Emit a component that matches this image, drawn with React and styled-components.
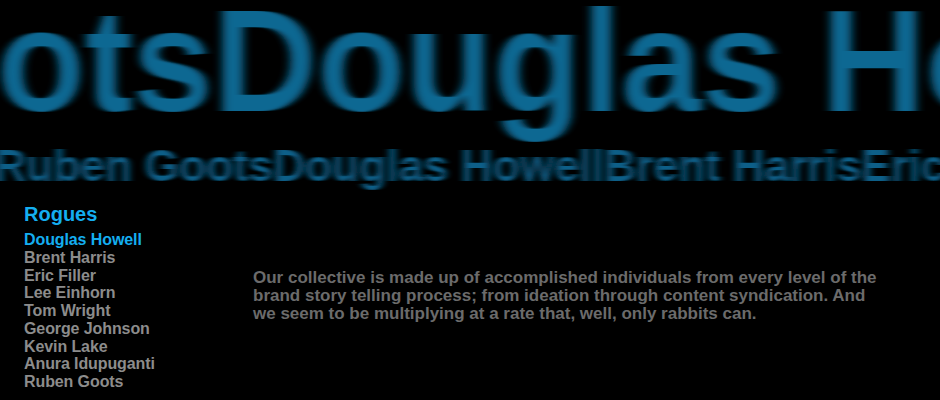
import React from 'react';
import styled, { createGlobalStyle } from 'styled-components';

const GlobalStyle = createGlobalStyle`
  * {
    margin: 0;
    padding: 0;
    box-sizing: border-box;
  }

  html, body {
    background: #000;
    width: 940px;
    height: 400px;
    overflow: hidden;
  }

  body {
    font-family: 'Liberation Sans', Arial, Helvetica, sans-serif;
    -webkit-font-smoothing: antialiased;
  }
`;

const rogues = [
  'Douglas Howell',
  'Brent Harris',
  'Eric Filler',
  'Lee Einhorn',
  'Tom Wright',
  'George Johnson',
  'Kevin Lake',
  'Anura Idupuganti',
  'Ruben Goots',
];

const Page = styled.div`
  width: 940px;
  height: 400px;
  background: #000;
  overflow: hidden;
  display: flex;
  flex-direction: column;
`;

const Banner = styled.div`
  height: 196px;
  overflow: hidden;
  display: flex;
  flex-direction: column;
`;

const Marquee = styled.div`
  white-space: nowrap;
  color: ${p => p.$color};
  font-size: ${p => p.$size}px;
  line-height: ${p => p.$lineHeight}px;
  letter-spacing: ${p => p.$spacing}px;
  font-weight: 700;
  margin-left: ${p => p.$shift}px;
  margin-top: ${p => p.$top}px;
  filter: url(#${p => p.$blur});
`;

const Body = styled.div`
  display: flex;
  padding: 6px 0 0 24px;
`;

const Sidebar = styled.nav`
  width: 229px;
  display: flex;
  flex-direction: column;
`;

const Heading = styled.h2`
  color: #14aef0;
  font-size: 20px;
  font-weight: 700;
  line-height: 24px;
  margin-bottom: 5px;
`;

const NameList = styled.ul`
  list-style: none;
`;

const Name = styled.li`
  color: ${p => (p.$active ? '#14aef0' : '#8c8c8c')};
  font-size: 16px;
  font-weight: 700;
  line-height: 17.75px;
  letter-spacing: -0.1px;
`;

const Blurb = styled.p`
  width: 630px;
  margin-top: 67px;
  color: #6b6b6b;
  font-size: 17px;
  font-weight: 700;
  line-height: 18px;
`;

const Filters = () => (
  <svg width="0" height="0" style={{ position: 'absolute' }} aria-hidden="true">
    <filter id="blurBig" x="-10%" y="-10%" width="120%" height="120%">
      <feGaussianBlur stdDeviation="5 0.6" />
    </filter>
    <filter id="blurSmall" x="-10%" y="-10%" width="120%" height="120%">
      <feGaussianBlur stdDeviation="3.5 0.4" />
    </filter>
  </svg>
);

export default function App() {
  return (
    <>
      <GlobalStyle />
      <Filters />
      <Page>
        <Banner>
          <Marquee
            $color="#0a6892"
            $size={145}
            $lineHeight={122}
            $spacing={-0.5}
            $shift={-692}
            $top={0}
            $blur="blurBig"
          >
            Ruben GootsDouglas Howell
          </Marquee>
          <Marquee
            $color="#0a5f88"
            $size={44}
            $lineHeight={46}
            $spacing={0.25}
            $shift={-6}
            $top={21}
            $blur="blurSmall"
          >
            Ruben GootsDouglas HowellBrent HarrisEric Filler
          </Marquee>
        </Banner>
        <Body>
          <Sidebar>
            <Heading>Rogues</Heading>
            <NameList>
              {rogues.map((n, i) => (
                <Name key={n} $active={i === 0}>
                  {n}
                </Name>
              ))}
            </NameList>
          </Sidebar>
          <Blurb>
            Our collective is made up of accomplished individuals from every level of the
            brand story telling process; from ideation through content syndication. And
            we seem to be multiplying at a rate that, well, only rabbits can.
          </Blurb>
        </Body>
      </Page>
    </>
  );
}
